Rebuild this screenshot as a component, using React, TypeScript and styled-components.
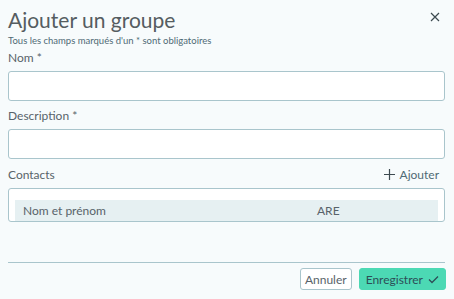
import React from "react";
import styled, { createGlobalStyle } from "styled-components";

const Global = createGlobalStyle`
  html, body { margin: 0; padding: 0; background: #f7fbfc; }
  body { font-family: Lato, "Open Sans", sans-serif; color: #505a5e; }
`;

const Dialog = styled.div`
  width: 454px;
  height: 299px;
  box-sizing: border-box;
  padding: 8px 8px 0 8px;
  background: #f7fbfc;
  display: flex;
  flex-direction: column;
  position: relative;
`;

const Title = styled.h1`
  margin: 0;
  font-size: 21px;
  font-weight: 400;
  line-height: 24px;
  color: #555d61;
`;

const Subtitle = styled.div`
  font-size: 9.5px;
  line-height: 13px;
  color: #4f6a75;
  margin-top: 2px;
`;

const Close = styled.button`
  position: absolute;
  top: 10px;
  right: 12px;
  width: 14px;
  height: 14px;
  padding: 0;
  border: none;
  background: none;
  display: flex;
  align-items: center;
  justify-content: center;
`;

const Label = styled.div<{ $top: number }>`
  font-size: 12px;
  line-height: 14px;
  color: #58636a;
  margin-top: ${(p) => p.$top}px;
`;

const Input = styled.input`
  display: block;
  box-sizing: border-box;
  width: 437px;
  height: 30px;
  margin-top: 6px;
  border: 1px solid #a9c5cc;
  border-radius: 3px;
  background: #fff;
`;

const ContactsHead = styled.div`
  display: flex;
  justify-content: space-between;
  align-items: center;
  margin-top: 8px;
  width: 437px;
`;

const AddButton = styled.button`
  display: flex;
  align-items: center;
  gap: 5px;
  border: none;
  background: none;
  padding: 0 6px 0 0;
  font-family: inherit;
  font-size: 12px;
  color: #4f6a75;
`;

const Table = styled.div`
  box-sizing: border-box;
  width: 437px;
  height: 34px;
  margin-top: 6px;
  border: 1px solid #a9c5cc;
  border-radius: 3px;
  background: #fff;
  padding: 11px 6px 0 6px;
`;

const HeaderRow = styled.div`
  display: grid;
  grid-template-columns: 294px 1fr;
  height: 21px;
  align-items: center;
  background: #e6f0f2;
  font-size: 12px;
  color: #58636a;
`;

const Cell = styled.div`
  padding-left: 8px;
`;

const Divider = styled.div`
  width: 437px;
  height: 1px;
  background: #a9c5cc;
  margin-top: 40px;
`;

const Footer = styled.div`
  display: flex;
  justify-content: flex-end;
  gap: 7px;
  width: 438px;
  margin-top: 5px;
`;

const Btn = styled.button<{ $primary?: boolean }>`
  display: flex;
  align-items: center;
  gap: 5px;
  height: 22px;
  box-sizing: border-box;
  padding: 0 ${(p) => (p.$primary ? 6 : 4)}px;
  border-radius: 3px;
  font-family: inherit;
  font-size: 12px;
  border: 1px solid ${(p) => (p.$primary ? "#4cd9b4" : "#a9c5cc")};
  background: ${(p) => (p.$primary ? "#4cd9b4" : "#fff")};
  color: ${(p) => (p.$primary ? "#2d4e57" : "#58636a")};
`;

export default function App() {
  return (
    <>
      <Global />
      <Dialog>
        <Title>Ajouter un groupe</Title>
        <Subtitle>Tous les champs marqués d'un * sont obligatoires</Subtitle>
        <Close aria-label="Fermer">
          <svg width="10" height="10" viewBox="0 0 10 10">
            <path d="M1 1 L9 9 M9 1 L1 9" stroke="#3d4a50" strokeWidth="1.2" />
          </svg>
        </Close>
        <Label $top={4}>Nom *</Label>
        <Input />
        <Label $top={8}>Description *</Label>
        <Input />
        <ContactsHead>
          <Label $top={0}>Contacts</Label>
          <AddButton>
            <svg width="11" height="11" viewBox="0 0 11 11">
              <path d="M5.5 0 V11 M0 5.5 H11" stroke="#3d4a50" strokeWidth="1.2" />
            </svg>
            Ajouter
          </AddButton>
        </ContactsHead>
        <Table>
          <HeaderRow>
            <Cell>Nom et prénom</Cell>
            <Cell>ARE</Cell>
          </HeaderRow>
        </Table>
        <Divider />
        <Footer>
          <Btn>Annuler</Btn>
          <Btn $primary>
            Enregistrer
            <svg width="11" height="9" viewBox="0 0 11 9">
              <path d="M1 4.5 L4 7.5 L10 1.5" stroke="#2d4e57" strokeWidth="1.3" fill="none" />
            </svg>
          </Btn>
        </Footer>
      </Dialog>
    </>
  );
}
